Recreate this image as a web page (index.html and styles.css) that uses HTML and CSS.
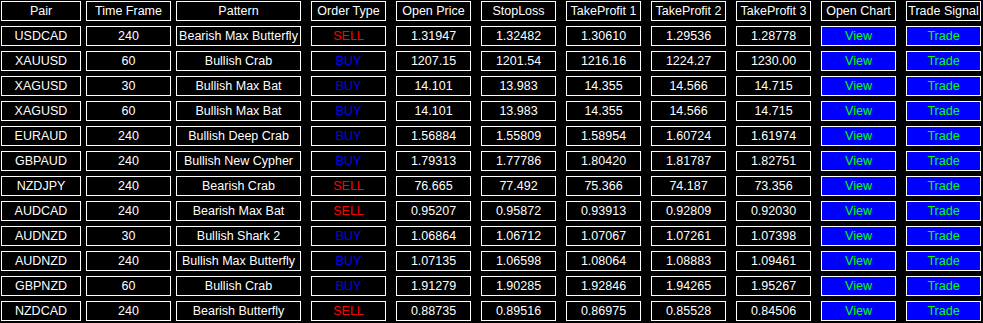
FILE: index.html
```html
<!DOCTYPE html>
<html>
<head>
<meta charset="utf-8">
<link rel="stylesheet" href="styles.css">
</head>
<body>
<div class="board" id="board">
  <div class="cell">Pair</div><div class="cell">Time Frame</div><div class="cell">Pattern</div><div class="cell">Order Type</div><div class="cell">Open Price</div><div class="cell">StopLoss</div><div class="cell">TakeProfit 1</div><div class="cell">TakeProfit 2</div><div class="cell">TakeProfit 3</div><div class="cell">Open Chart</div><div class="cell">Trade Signal</div>

  <div class="cell">USDCAD</div><div class="cell">240</div><div class="cell">Bearish Max Butterfly</div><div class="cell sell">SELL</div><div class="cell">1.31947</div><div class="cell">1.32482</div><div class="cell">1.30610</div><div class="cell">1.29536</div><div class="cell">1.28778</div><div class="cell btn">View</div><div class="cell btn">Trade</div>

  <div class="cell">XAUUSD</div><div class="cell">60</div><div class="cell">Bullish Crab</div><div class="cell buy">BUY</div><div class="cell">1207.15</div><div class="cell">1201.54</div><div class="cell">1216.16</div><div class="cell">1224.27</div><div class="cell">1230.00</div><div class="cell btn">View</div><div class="cell btn">Trade</div>

  <div class="cell">XAGUSD</div><div class="cell">30</div><div class="cell">Bullish Max Bat</div><div class="cell buy">BUY</div><div class="cell">14.101</div><div class="cell">13.983</div><div class="cell">14.355</div><div class="cell">14.566</div><div class="cell">14.715</div><div class="cell btn">View</div><div class="cell btn">Trade</div>

  <div class="cell">XAGUSD</div><div class="cell">60</div><div class="cell">Bullish Max Bat</div><div class="cell buy">BUY</div><div class="cell">14.101</div><div class="cell">13.983</div><div class="cell">14.355</div><div class="cell">14.566</div><div class="cell">14.715</div><div class="cell btn">View</div><div class="cell btn">Trade</div>

  <div class="cell">EURAUD</div><div class="cell">240</div><div class="cell">Bullish Deep Crab</div><div class="cell buy">BUY</div><div class="cell">1.56884</div><div class="cell">1.55809</div><div class="cell">1.58954</div><div class="cell">1.60724</div><div class="cell">1.61974</div><div class="cell btn">View</div><div class="cell btn">Trade</div>

  <div class="cell">GBPAUD</div><div class="cell">240</div><div class="cell">Bullish New Cypher</div><div class="cell buy">BUY</div><div class="cell">1.79313</div><div class="cell">1.77786</div><div class="cell">1.80420</div><div class="cell">1.81787</div><div class="cell">1.82751</div><div class="cell btn">View</div><div class="cell btn">Trade</div>

  <div class="cell">NZDJPY</div><div class="cell">240</div><div class="cell">Bearish Crab</div><div class="cell sell">SELL</div><div class="cell">76.665</div><div class="cell">77.492</div><div class="cell">75.366</div><div class="cell">74.187</div><div class="cell">73.356</div><div class="cell btn">View</div><div class="cell btn">Trade</div>

  <div class="cell">AUDCAD</div><div class="cell">240</div><div class="cell">Bearish Max Bat</div><div class="cell sell">SELL</div><div class="cell">0.95207</div><div class="cell">0.95872</div><div class="cell">0.93913</div><div class="cell">0.92809</div><div class="cell">0.92030</div><div class="cell btn">View</div><div class="cell btn">Trade</div>

  <div class="cell">AUDNZD</div><div class="cell">30</div><div class="cell">Bullish Shark 2</div><div class="cell buy">BUY</div><div class="cell">1.06864</div><div class="cell">1.06712</div><div class="cell">1.07067</div><div class="cell">1.07261</div><div class="cell">1.07398</div><div class="cell btn">View</div><div class="cell btn">Trade</div>

  <div class="cell">AUDNZD</div><div class="cell">240</div><div class="cell">Bullish Max Butterfly</div><div class="cell buy">BUY</div><div class="cell">1.07135</div><div class="cell">1.06598</div><div class="cell">1.08064</div><div class="cell">1.08883</div><div class="cell">1.09461</div><div class="cell btn">View</div><div class="cell btn">Trade</div>

  <div class="cell">GBPNZD</div><div class="cell">60</div><div class="cell">Bullish Crab</div><div class="cell buy">BUY</div><div class="cell">1.91279</div><div class="cell">1.90285</div><div class="cell">1.92846</div><div class="cell">1.94265</div><div class="cell">1.95267</div><div class="cell btn">View</div><div class="cell btn">Trade</div>

  <div class="cell">NZDCAD</div><div class="cell">240</div><div class="cell">Bearish Butterfly</div><div class="cell sell">SELL</div><div class="cell">0.88735</div><div class="cell">0.89516</div><div class="cell">0.86975</div><div class="cell">0.85528</div><div class="cell">0.84506</div><div class="cell btn">View</div><div class="cell btn">Trade</div>
</div>
</body>
</html>
```

FILE: styles.css
```css
html, body {
  margin: 0;
  padding: 0;
  background: #000;
}

body {
  padding: 1px 0 0 1px;
  font-family: "Liberation Sans", Arial, sans-serif;
  font-size: 12.5px;
  color: #fff;
}

.board {
  display: grid;
  grid-template-columns: 85px 90px 135px repeat(8, 85px);
  grid-auto-rows: 25px;
}

.cell {
  box-sizing: border-box;
  width: 75px;
  height: 20px;
  border: 1px solid #fff;
  background: #000;
  display: flex;
  align-items: center;
  justify-content: center;
  padding-top: 1px;
  white-space: nowrap;
  overflow: hidden;
  line-height: 1;
}

.cell:nth-child(11n+1) { width: 80px; }
.cell:nth-child(11n+2) { width: 85px; }
.cell:nth-child(11n+3) { width: 125px; }

.sell { color: #ff0000; }
.buy { color: #0000ff; }

.btn {
  background: #0000ff;
  color: #00ff00;
}
```
